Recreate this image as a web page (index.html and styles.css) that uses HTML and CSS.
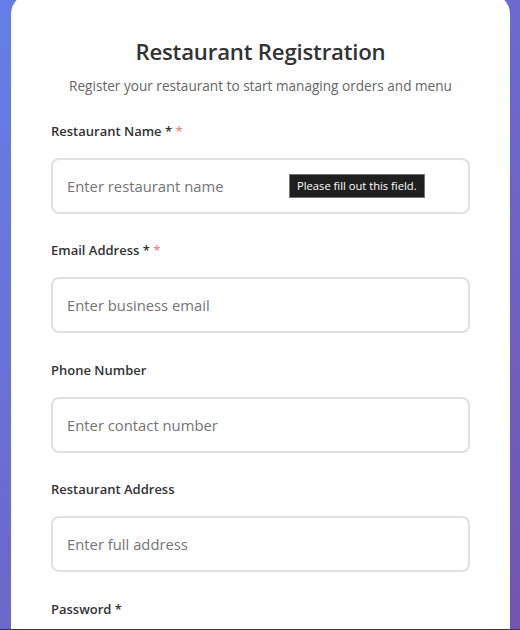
FILE: index.html
```html
<!DOCTYPE html>
<html lang="en">
<head>
<meta charset="utf-8">
<title>Restaurant Registration</title>
<link rel="stylesheet" href="styles.css">
</head>
<body>
<div class="page">
  <div class="card">
    <h1 class="title">Restaurant Registration</h1>
    <p class="subtitle">Register your restaurant to start managing orders and menu</p>
    <form class="form">
      <div class="group">
        <label class="label">Restaurant Name * <span class="req">*</span></label>
        <div class="field-wrap">
          <input class="input" type="text" placeholder="Enter restaurant name">
          <div class="tooltip">Please fill out this field.</div>
        </div>
      </div>
      <div class="group">
        <label class="label">Email Address * <span class="req">*</span></label>
        <input class="input" type="email" placeholder="Enter business email">
      </div>
      <div class="group">
        <label class="label">Phone Number</label>
        <input class="input" type="tel" placeholder="Enter contact number">
      </div>
      <div class="group">
        <label class="label">Restaurant Address</label>
        <input class="input" type="text" placeholder="Enter full address">
      </div>
      <div class="group">
        <label class="label">Password *</label>
        <input class="input" type="password" placeholder="Enter password">
      </div>
    </form>
  </div>
</div>
<div class="edge"></div>
</body>
</html>
```
FILE: styles.css
```css
* { box-sizing: border-box; }
html, body { margin: 0; padding: 0; }
body {
  font-family: "Open Sans", "Noto Sans", sans-serif;
  background: linear-gradient(135deg, #667eea 0%, #764ba2 100%);
  min-height: 900px;
  color: #333;
  overflow: hidden;
}
.page {
  padding: 0 10px 0 11px;
  margin-top: -6px;
}
.card {
  width: 499px;
  background: #fff;
  border-radius: 20px;
  padding: 42px 40px 40px;
  min-height: 800px;
}
.title {
  margin: 0;
  text-align: center;
  font-size: 22.2px;
  font-weight: 600;
  line-height: 32px;
  color: #333;
  letter-spacing: -0.2px;
}
.subtitle {
  margin: 8px 0 0;
  text-align: center;
  font-size: 13.6px;
  line-height: 20px;
  color: #666;
}
.form { margin-top: 25px; }
.group { margin-bottom: 26.4px; }
.label {
  display: block;
  font-size: 13px;
  font-weight: 600;
  line-height: 20px;
  color: #333;
  margin-bottom: 17px;
}
.req { color: #f08a8a; }
.field-wrap { position: relative; }
.input {
  display: block;
  width: 100%;
  height: 56px;
  padding: 0 14px;
  border: 2px solid #e1e1e1;
  border-radius: 8px;
  font-family: inherit;
  font-size: 14.8px;
  color: #333;
  background: #fff;
  outline: none;
}
.input::placeholder { color: #757575; }
.tooltip {
  position: absolute;
  left: 238px;
  top: 16px;
  height: 24px;
  padding: 0 7px;
  background: #1f1f1f;
  border: 1px solid #767676;
  color: #fff;
  font-size: 11.2px;
  line-height: 22px;
  white-space: nowrap;
}
.edge {
  position: fixed;
  left: 0;
  right: 0;
  bottom: 0;
  height: 1px;
  background: #3a3a3a;
}
```
